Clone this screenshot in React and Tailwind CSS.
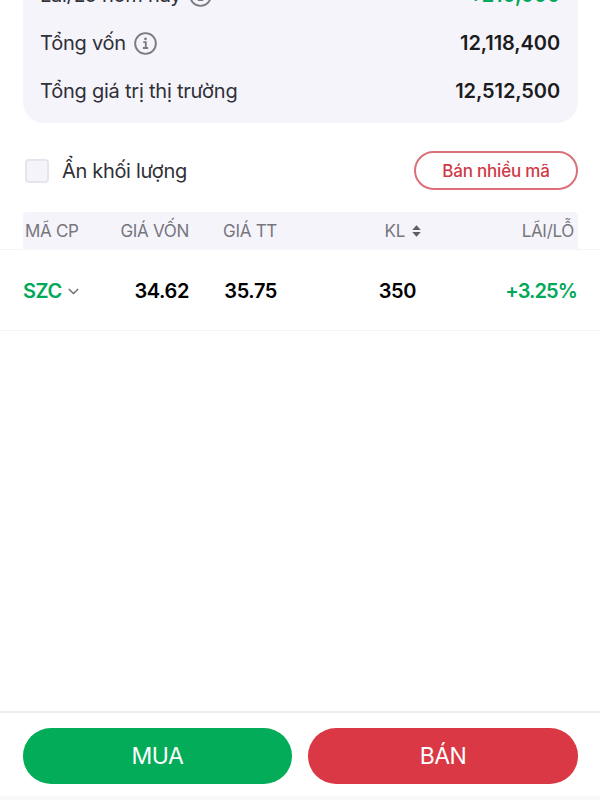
import React from "react";

const holdings = [
  { code: "SZC", cost: "34.62", price: "35.75", volume: "350", profit: "+3.25%" },
];

const InfoIcon = () => (
  <svg className="h-[23px] w-[23px] text-[#7b7a80]" viewBox="0 0 24 24" fill="none" stroke="currentColor">
    <circle cx="12" cy="12" r="10.8" strokeWidth="2" />
    <path d="M9.7 10.6h2.6v6M9.2 16.7h5.6" strokeWidth="1.9" />
    <circle cx="12" cy="7.2" r="1.4" fill="currentColor" stroke="none" />
  </svg>
);

const SortIcon = () => (
  <svg className="mb-[2px] h-[12px] w-[9px] text-[#5f5e66]" viewBox="0 0 9 12" fill="currentColor">
    <path d="M4.5 0.3 8.8 4.9H0.2ZM4.5 11.7 8.8 7.1H0.2Z" />
  </svg>
);

const ChevronIcon = () => (
  <svg className="h-[7px] w-[11px] text-[#6b6a70]" viewBox="0 0 11 7" fill="none" stroke="currentColor" strokeWidth="1.4">
    <path d="M0.8 1 5.5 5.6 10.2 1" />
  </svg>
);

const SummaryRow = ({ label, value, info, positive }) => (
  <div className="flex h-12 items-center justify-between">
    <div className="flex items-center gap-2">
      <span className="text-[20px] tracking-[-0.22px] text-[#303036]">{label}</span>
      {info && <InfoIcon />}
    </div>
    <span
      className={
        positive
          ? "text-[20px] font-semibold tracking-[-0.1px] text-[#00a859]"
          : "text-[20px] font-semibold tracking-[-0.1px] text-[#1c1c20]"
      }
    >
      {value}
    </span>
  </div>
);

const App = () => {
  return (
    <div className="flex h-[800px] w-[600px] flex-col overflow-hidden bg-white font-['Inter','Noto_Sans',sans-serif] whitespace-nowrap">
      {/* Summary */}
      <div className="mr-[22px] ml-[23px] -mt-[29px] h-[152px] shrink-0 rounded-b-[21px] bg-[#f5f4fb] pr-[18px] pl-[17px]">
        <SummaryRow label="Lãi/Lỗ hôm nay" value="+210,000" info positive />
        <SummaryRow label="Tổng vốn" value="12,118,400" info />
        <SummaryRow label="Tổng giá trị thị trường" value="12,512,500" />
      </div>

      {/* Filter */}
      <div className="mt-7 flex h-[39px] shrink-0 items-center justify-between pr-[22px] pl-[25px]">
        <label className="flex items-center gap-[13px]">
          <span className="h-6 w-6 rounded-[4px] border-2 border-[#e6e5ee] bg-[#f5f4fb]" />
          <span className="text-[20px] tracking-[-0.32px] text-[#303036]">Ẩn khối lượng</span>
        </label>
        <button className="h-[39px] w-[164px] rounded-full border-2 border-[#dc7079] pt-[2px] text-[17px] font-medium tracking-[-0.2px] text-[#cf3a47]">
          Bán nhiều mã
        </button>
      </div>

      {/* Table header */}
      <div className="mr-[22px] ml-[23px] mt-[22px] flex h-[37px] shrink-0 items-center rounded-t-[4px] bg-[#f5f4fb] pt-[2px] text-[17px] tracking-[-0.3px] text-[#77767d]">
        <span className="w-[78px] pl-[2px]">MÃ CP</span>
        <span className="w-[88px] text-right">GIÁ VỐN</span>
        <span className="w-[88px] text-right">GIÁ TT</span>
        <span className="flex w-[144px] items-center justify-end gap-[7px]">
          KL <SortIcon />
        </span>
        <span className="flex-1 pr-[4px] text-right">LÃI/LỖ</span>
      </div>

      {holdings.map((item) => (
        <div
          key={item.code}
          className="flex h-[82px] shrink-0 items-center border-y border-[#f5f5f7] px-[23px] pt-[2px] text-[20px] font-semibold tracking-[-0.4px] text-black"
        >
          <span className="flex w-[78px] items-center gap-[6px] text-[#00a859]">
            {item.code} <ChevronIcon />
          </span>
          <span className="w-[88px] text-right">{item.cost}</span>
          <span className="w-[88px] text-right">{item.price}</span>
          <span className="w-[139px] text-right">{item.volume}</span>
          <span className="flex-1 text-right tracking-[-0.9px] text-[#00a859]">{item.profit}</span>
        </div>
      ))}

      {/* Actions */}
      <div className="mt-auto flex h-[89px] shrink-0 flex-col justify-between border-t-2 border-[#eeeeef]">
        <div className="flex justify-between pr-[22px] pl-[23px] pt-[15px] text-[23px] tracking-[-0.5px] text-white">
          <button className="h-14 w-[269px] rounded-full bg-[#03ac58] pt-[1px]">MUA</button>
          <button className="h-14 w-[270px] rounded-full bg-[#d93844] pt-[1px]">BÁN</button>
        </div>
        <div className="h-1 bg-[#f8f8f8]" />
      </div>
    </div>
  );
};

export default App;
